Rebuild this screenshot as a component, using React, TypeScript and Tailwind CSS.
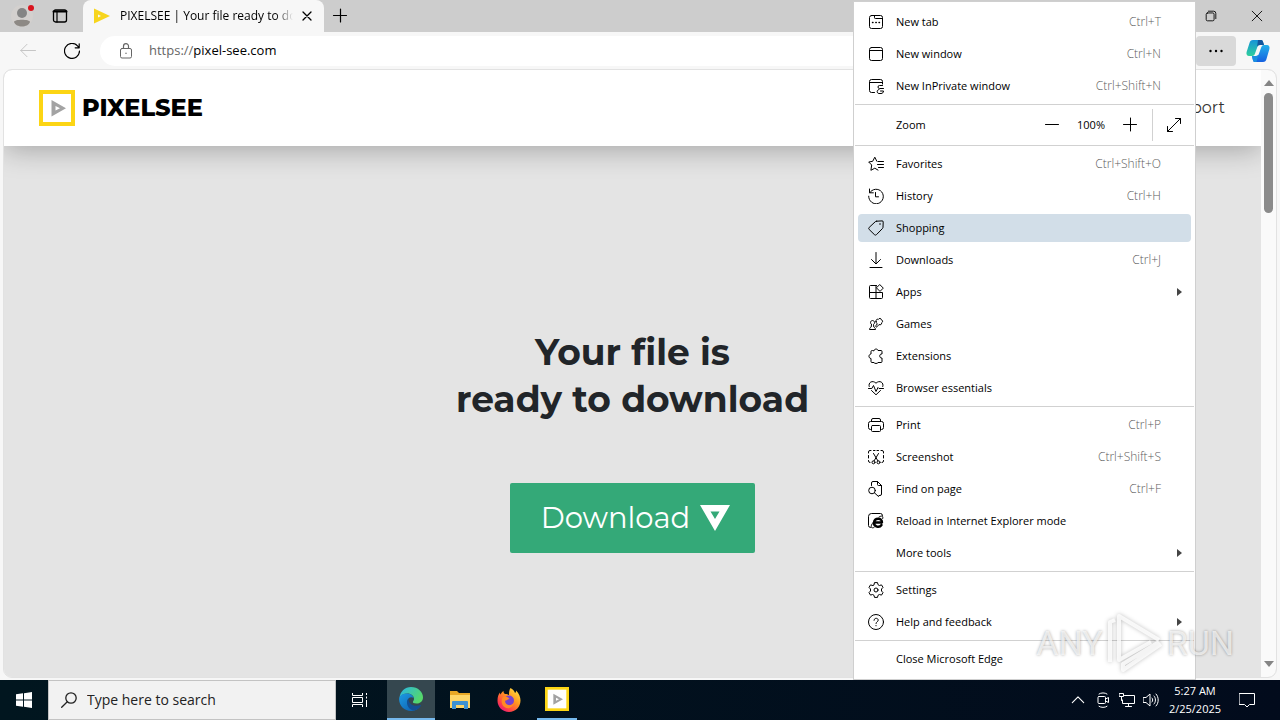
import type { ReactNode } from "react";

type IconProps = { children: ReactNode; size?: string };

// 16px outline icon used all over the browser chrome
function Icon({ children, size = "size-4" }: IconProps) {
  return (
    <svg viewBox="0 0 16 16" fill="none" stroke="currentColor" strokeLinejoin="round" strokeLinecap="round" className={`${size} shrink-0`} aria-hidden="true">
      {children}
    </svg>
  );
}

const icons: Record<string, ReactNode> = {
  newTab: (
    <>
      <rect x="1.5" y="1.5" width="13" height="13" rx="2" />
      <path d="M6.5 1.5v2.2a.8.8 0 0 0 .8.8h7.2" />
      <path d="M4.5 8.5h.5M7.8 8.5h.5M11 8.5h.5" strokeWidth="1.4" />
    </>
  ),
  newWindow: (
    <>
      <rect x="1.5" y="1.5" width="13" height="13" rx="2" />
      <path d="M1.5 4.5h13" />
    </>
  ),
  inPrivate: (
    <>
      <path d="M6.5 14.5h-3a2 2 0 0 1-2-2v-9a2 2 0 0 1 2-2h9a2 2 0 0 1 2 2V6M1.5 4.5h13" />
      <path d="M14.5 7.5h-3a1.5 1.5 0 0 0 0 3h3M15.5 10.500h-3M11 11.500c-2.500 0-2.500 4 0 4h2c1.500 0 2.500-1 2.500-2.500h-3" />
    </>
  ),
  favorites: (
    <>
      <path d="M8.8 5.2l-2-4-2.100 4.100L.7 6l3 3-.8 5.300 3.900-2.100 3.200 1.900" />
      <path d="M10 5.500h5.500M9.500 8.500h6M10.500 11.500h5" />
    </>
  ),
  history: (
    <>
      <path d="M1.500 1v3.800h3.800" />
      <path d="M1.700 4.800a7.300 7.300 0 1 1-1 3.400M7.500 4.500v4.300h3" />
    </>
  ),
  shopping: (
    <>
      <path d="M8.700 1.200 14 .9a1.100 1.100 0 0 1 1.200 1.200L15 7.300a2 2 0 0 1-.6 1.300l-5.900 6a1.500 1.500 0 0 1-2.100 0L1.200 9.500a1.500 1.500 0 0 1 0-2.100l6.100-5.700a2 2 0 0 1 1.400-.5Z" />
      <circle cx="12" cy="4" r=".8" fill="currentColor" stroke="none" />
    </>
  ),
  downloads: <path d="M8 .5v11M3.500 7.500 8 12l4.500-4.500M2 15.500h12" />,
  apps: (
    <>
      <path d="M8.500 1.500h-6a1 1 0 0 0-1 1v11a1 1 0 0 0 1 1h11a1 1 0 0 0 1-1v-5h-13M8 1.500v13" />
      <path d="M12 .8 15.300 4.100 12 7.400 8.700 4.100Z" fill="white" />
    </>
  ),
  games: (
    <>
      <path d="M3.500 8.500C1.800 7.500 2.300 4.500 4.500 4.500s2.700 3 1 4l.3 2.500c1 .5 1.700 1.500 1.700 2.500h-6c0-1 .7-2 1.700-2.500l.3-2.500" />
      <path d="M8 5.500C7.500 3.500 9.500 2.700 10.300 3.500c.7-1.800 3-1.300 3 .3 1.800.4 1.600 2.500.3 3 .3 1.800-1.300 2.500-2.600 1.700l-2 2.300c-.7.7-1.700-.3-1.200-1l1.500-2C8.500 7.500 8 6.500 8 5.500Z" />
    </>
  ),
  extensions: (
    <path d="M6 2.500c.2-2 3.800-2 4 0h3a1 1 0 0 1 1 1V6c-3-.6-3 4.600 0 4v3.500a1 1 0 0 1-1 1h-3c-.4 1.300-3.600 1.300-4 0H4a1 1 0 0 1-1-1v-3C.3 10.300.3 6.300 3 6V3.500a1 1 0 0 1 1-1Z" />
  ),
  essentials: (
    <>
      <path d="M1.200 6.500C-.2 2.500 4.500-.3 8 3.200c3.500-3.500 8.200-.7 6.800 3.300M3.500 10.500 8 14.800l4.500-4.300" />
      <path d="M.5 8.500h3.300l1.700-3 2.500 6 2-4 1 1h4.500" />
    </>
  ),
  print: (
    <>
      <path d="M3.500 12.500h-1a2 2 0 0 1-2-2v-4a2 2 0 0 1 2-2h11a2 2 0 0 1 2 2v4a2 2 0 0 1-2 2h-1M3.500 4.500V3A1.500 1.500 0 0 1 5 1.500h6A1.500 1.500 0 0 1 12.500 3v1.500" />
      <rect x="3.5" y="8.5" width="9" height="6" rx="1" />
    </>
  ),
  screenshot: (
    <>
      <path d="M3 1.500H2A1.500 1.500 0 0 0 .5 3v1M5.500 1.500H7M9 1.500h1.500M13 1.500h1A1.500 1.500 0 0 1 15.500 3v1M15.500 6.500V9M15.500 11.500v.5a1.500 1.500 0 0 1-1.500 1.500M.5 6.500V9M.5 11.500v.5A1.500 1.500 0 0 0 2 13.500" />
      <path d="m5.500 4.500 4.500 7.500M10.500 4.500 6 12" />
      <circle cx="5.500" cy="13.300" r="1.500" />
      <circle cx="10.500" cy="13.300" r="1.500" />
    </>
  ),
  find: (
    <>
      <path d="M3.500 4.500V2A1.500 1.500 0 0 1 5 .5h4.500l4 4V13a1.500 1.500 0 0 1-1.500 1.500h-1M9.500.5v3a1 1 0 0 0 1 1h3" />
      <circle cx="4" cy="9.500" r="3.300" />
      <path d="m6.500 11.900 4 3.600" />
    </>
  ),
  ie: (
    <>
      <path d="M2.500 14.500a2 2 0 0 1-2-2v-9a3 3 0 0 1 3-3h9a2 2 0 0 1 2 2" />
      <path d="M6 9.500h8c.2-5-7.500-5-8 0-.3 4.500 5.500 5.500 7.500 2.500" strokeWidth="2.4" />
      <path d="M5.500 9C2 13 2.500 16 6 14.500M11 4c3-1.800 4.500-1 3.700 1.500" />
    </>
  ),
  settings: (
    <>
      <path d="M6 2.700 6.500.6h3l.5 2.100 1.400.8 2.100-.6 1.500 2.500L13.500 7v2l1.500 1.600-1.500 2.500-2.100-.6-1.400.8-.5 2.100h-3L6 13.300l-1.400-.8-2.100.6L1 10.600 2.500 9V7L1 5.400l1.500-2.500 2.100.6Z" />
      <circle cx="8" cy="8" r="2" />
    </>
  ),
  help: (
    <>
      <circle cx="8" cy="8" r="7.500" />
      <path d="M6 6.300c0-2.800 4.200-2.600 4.200-.1C10.200 7.800 8 7.700 8 9.500M8 11.500v.3" />
    </>
  ),
};

type MenuEntry = {
  label: string;
  icon?: string;
  keys?: string;
  submenu?: boolean;
  active?: boolean;
};

const newItems: MenuEntry[] = [
  { label: "New tab", icon: "newTab", keys: "Ctrl+T" },
  { label: "New window", icon: "newWindow", keys: "Ctrl+N" },
  { label: "New InPrivate window", icon: "inPrivate", keys: "Ctrl+Shift+N" },
];

const browseItems: MenuEntry[] = [
  { label: "Favorites", icon: "favorites", keys: "Ctrl+Shift+O" },
  { label: "History", icon: "history", keys: "Ctrl+H" },
  { label: "Shopping", icon: "shopping", active: true },
  { label: "Downloads", icon: "downloads", keys: "Ctrl+J" },
  { label: "Apps", icon: "apps", submenu: true },
  { label: "Games", icon: "games" },
  { label: "Extensions", icon: "extensions" },
  { label: "Browser essentials", icon: "essentials" },
];

const pageItems: MenuEntry[] = [
  { label: "Print", icon: "print", keys: "Ctrl+P" },
  { label: "Screenshot", icon: "screenshot", keys: "Ctrl+Shift+S" },
  { label: "Find on page", icon: "find", keys: "Ctrl+F" },
  { label: "Reload in Internet Explorer mode", icon: "ie" },
  { label: "More tools", submenu: true },
];

const helpItems: MenuEntry[] = [
  { label: "Settings", icon: "settings" },
  { label: "Help and feedback", icon: "help", submenu: true },
];

function MenuItem({ item }: { item: MenuEntry }) {
  return (
    <button
      type="button"
      role="menuitem"
      className={`mx-1 my-0.5 flex h-7 items-center rounded-sm pr-2 pl-2.5 text-left ${item.active ? "bg-[#d2dee8]" : ""}`}
    >
      <span className="mr-3 flex size-4 shrink-0">{item.icon && <Icon>{icons[item.icon]}</Icon>}</span>
      <span className="flex-1">{item.label}</span>
      {item.keys && <span className="text-xs font-light text-[#5c5c5c]">{item.keys}</span>}
      <span className="ml-3 flex w-2.5 justify-end">
        {item.submenu && (
          <svg viewBox="0 0 6 8" className="h-2 w-1.5" aria-hidden="true">
            <path d="M0 0v8l5-4Z" fill="#444" />
          </svg>
        )}
      </span>
    </button>
  );
}

function MenuGroup({ items }: { items: MenuEntry[] }) {
  return (
    <div role="group" className="flex flex-col">
      {items.map((item) => (
        <MenuItem key={item.label} item={item} />
      ))}
    </div>
  );
}

function Separator() {
  return <div role="separator" className="mx-px my-0.5 h-px shrink-0 bg-[#d1d1d1]" />;
}

function BrowserMenu() {
  return (
    <div role="menu" className="absolute top-px right-[84px] flex w-[343px] flex-col border border-[#cfcfcf] bg-white py-1 text-[11px] text-black">
      <MenuGroup items={newItems} />
      <Separator />
      <div className="flex h-9 items-center pl-[42px]">
        <span className="flex-1">Zoom</span>
        <button type="button" aria-label="Zoom out" className="flex w-8 justify-center">
          <Icon><path d="M1.500 7.500h13" /></Icon>
        </button>
        <span className="w-[46px] text-center">100%</span>
        <button type="button" aria-label="Zoom in" className="flex w-8 justify-center">
          <Icon><path d="M1.500 7.500h13M8.500 1v13" /></Icon>
        </button>
        <button type="button" aria-label="Full screen" className="ml-1.5 flex h-8 w-[43px] items-center justify-center border-l border-[#d1d1d1]">
          <Icon><path d="M1.500 14.500l13-13M9.500 1.500h5v5M1.500 9.500v5h5" /></Icon>
        </button>
      </div>
      <Separator />
      <MenuGroup items={browseItems} />
      <Separator />
      <MenuGroup items={pageItems} />
      <Separator />
      <MenuGroup items={helpItems} />
      <Separator />
      <MenuItem item={{ label: "Close Microsoft Edge" }} />
    </div>
  );
}

function TitleBar() {
  return (
    <header className="flex h-8 bg-[#cdcdcd]">
      <button type="button" aria-label="Profile" className="ml-1 flex w-9 items-center justify-center">
        <svg viewBox="0 0 24 24" className="size-6" aria-hidden="true">
          <circle cx="12" cy="12" r="11" fill="#d3d0ce" />
          <circle cx="12" cy="9" r="5" fill="#858585" />
          <path d="M4 18c0-3 16-3 16 0-2 6-14 6-16 0Z" fill="#8d8985" />
          <circle cx="21" cy="4" r="3" fill="#d9141e" />
        </svg>
      </button>
      <button type="button" aria-label="Tab actions" className="flex w-10 items-center justify-center">
        <Icon>
          <rect x="1.5" y="2" width="13" height="12" rx="2" strokeWidth="1.3" />
          <path d="M1.500 3.500h13" strokeWidth="2" />
          <path d="M5 4v10" strokeWidth="1.2" />
        </Icon>
      </button>
      <div className="ml-[3px] flex w-[241px] items-center rounded-t-lg bg-[#f7f7f7] pl-[11px]">
        <svg viewBox="0 0 16 16" className="size-4 shrink-0" aria-hidden="true">
          <path d="M0 .5v15L16 8ZM4 6.500 7 8 4 9.500Z" fill="#f7d51d" fillRule="evenodd" />
        </svg>
        <span className="ml-2.5 w-[173px] overflow-hidden mask-r-from-90% text-xs whitespace-nowrap">PIXELSEE | Your file ready to down</span>
        <button type="button" aria-label="Close tab" className="ml-1.5">
          <Icon><path d="m4 4 8 8M12 4l-8 8" strokeWidth="1.3" /></Icon>
        </button>
      </div>
      <button type="button" aria-label="New tab" className="ml-2">
        <Icon><path d="M1.500 7.500h13M8.500 1v13" strokeWidth="1.2" /></Icon>
      </button>
      <div className="ml-auto flex">
        <button type="button" aria-label="Restore" className="flex w-[46px] items-center justify-center">
          <Icon size="size-3.5">
            <rect x="2.5" y="4.5" width="9" height="9" rx="1.5" />
            <path d="M5 2.500h6a2.500 2.500 0 0 1 2.500 2.500v6" />
          </Icon>
        </button>
        <button type="button" aria-label="Close" className="flex w-[46px] items-center justify-center">
          <Icon size="size-3.5"><path d="m2.500 2.500 11 11M13.500 2.500l-11 11" /></Icon>
        </button>
      </div>
    </header>
  );
}

function CopilotLogo() {
  return (
    <svg viewBox="0 0 24 24" className="size-6" aria-hidden="true">
      <defs>
        <linearGradient id="copilotA" x1="0" y1="0" x2="0" y2="1">
          <stop offset="0" stopColor="#1593d8" />
          <stop offset="1" stopColor="#2fcf9c" />
        </linearGradient>
        <linearGradient id="copilotB" x1="0" y1="0" x2="0" y2="1">
          <stop offset="0" stopColor="#22b0ea" />
          <stop offset="1" stopColor="#1560e0" />
        </linearGradient>
      </defs>
      <path d="M7 1h8c2 0 2 2 3 5h-4c-2 0-2.500 1-3 3l-2 5.500c-.5 1.500-1 2.500-3 2.500H3c-2 0-3-2-2.400-4L3.500 4C4 2 5 1 7 1Z" fill="url(#copilotA)" />
      <path d="M17 23H9c-2 0-2-2-3-6h4c2 0 2.500-1 3-2.500l2-5.500c.5-1.500 1-3 3-3h3c2 0 3 2 2.400 4L20.500 20c-.5 2-1.500 3-3.500 3Z" fill="url(#copilotB)" />
      <path d="M12 1h3c2 0 2 2 3 5h-4c-1.500 0-2.500.7-3 2Z" fill="#12559c" />
      <path d="M6 17h4c1 0 1.700-.3 2.300-1L10.500 23H9c-2 0-2-2-3-6Z" fill="#1a8fe0" />
    </svg>
  );
}

function Toolbar() {
  return (
    <div className="flex h-[38px] items-center bg-[#f7f7f7]">
      <button type="button" aria-label="Back" disabled className="ml-5 text-[#c6c6c6]">
        <Icon><path d="M15.500 7.500H.8M7 1.300.8 7.500 7 13.700" /></Icon>
      </button>
      <button type="button" aria-label="Refresh" className="ml-7">
        <Icon><path d="M15.500 8a7.500 7.500 0 1 1-2-5.200L15 4.500M15.200.8v4h-4" strokeWidth="1.2" /></Icon>
      </button>
      <form className="ml-5 flex h-[30px] flex-1 items-center rounded-full bg-white pl-[18px] text-[#666]">
        <Icon>
          <rect x="2.5" y="5.500" width="11" height="9.500" rx="1.5" />
          <path d="M5.500 5.500V3.200a2.500 2.500 0 0 1 5 0v2.300M8 10v.5" strokeWidth="1.2" />
        </Icon>
        <label htmlFor="address" className="ml-[15px] text-[13px]">https://</label>
        <input id="address" defaultValue="pixel-see.com" className="min-w-0 flex-1 text-[13px] text-black outline-none" />
      </form>
      <button type="button" aria-label="Settings and more" className="flex h-[30px] w-10 items-center justify-center rounded-sm bg-[#d9d9d9]">
        <svg viewBox="0 0 16 16" className="size-4" aria-hidden="true">
          <circle cx="2.500" cy="8" r="1.200" />
          <circle cx="8" cy="8" r="1.200" />
          <circle cx="13.500" cy="8" r="1.200" />
        </svg>
      </button>
      <button type="button" aria-label="Copilot" className="mx-2.5">
        <CopilotLogo />
      </button>
    </div>
  );
}

function PixelSeeMark({ className }: { className: string }) {
  return (
    <svg viewBox="0 0 36 36" className={className} aria-hidden="true">
      <rect x="2" y="2" width="32" height="32" fill="#fff" stroke="#fcd514" strokeWidth="4" />
      <path d="M12.500 10v16.500L27 18.200ZM16.500 16l4.500 2.200-4.500 2.300Z" fill="#a3a3a3" fillRule="evenodd" />
    </svg>
  );
}

function WebPage() {
  return (
    <div className="mx-1 mb-[3px] flex flex-1 overflow-hidden rounded-lg bg-[#e4e4e4] outline outline-[#e2e2e2]">
      <main className="flex flex-1 flex-col font-[Montserrat,Lato,sans-serif]">
        <div className="flex h-[76px] items-center justify-between bg-white pr-9 pl-[35px] shadow-[0_4px_28px_rgba(0,0,0,0.28)]">
          <a href="#home" className="flex items-center gap-[7px] text-2xl font-extrabold text-black">
            <PixelSeeMark className="size-9" />
            PIXELSEE
          </a>
          <a href="#support" className="text-base text-[#333]">Support</a>
        </div>
        <div className="flex flex-1 flex-col items-center pt-[183px]">
          <h1 className="text-center text-4xl leading-[47px] font-bold text-[#212529]">
            Your file is
            <br />
            ready to download
          </h1>
          <button type="button" className="mt-[60px] flex h-[70px] w-[245px] items-center justify-center gap-2.5 rounded-xs bg-[#34a978] pl-1.5 text-[29px] text-white">
            Download
            <svg viewBox="0 0 30 26" className="h-[26px] w-[30px]" aria-hidden="true">
              <path d="M0 0h30L15 26ZM10.500 6.500h9L15 14Z" fill="#fff" fillRule="evenodd" />
            </svg>
          </button>
        </div>
      </main>
      <div className="flex w-[15px] flex-col items-center justify-between bg-[#fafafa] py-2.5">
        <svg viewBox="0 0 10 6" className="h-1.5 w-2.5" aria-hidden="true"><path d="M0 6h10L5 0Z" fill="#858585" /></svg>
        <div className="mt-[7px] mb-auto h-[120px] w-[9px] rounded-full bg-[#8b8b8b]" />
        <svg viewBox="0 0 10 6" className="h-1.5 w-2.5" aria-hidden="true"><path d="M0 0h10L5 6Z" fill="#858585" /></svg>
      </div>
    </div>
  );
}

function EdgeLogo() {
  return (
    <svg viewBox="0 0 24 24" className="size-6" aria-hidden="true">
      <defs>
        <linearGradient id="edgeTop" x1="0" y1="0" x2="1" y2=".5">
          <stop offset="0" stopColor="#28b5e8" />
          <stop offset="1" stopColor="#55d86a" />
        </linearGradient>
        <linearGradient id="edgeLow" x1="0" y1="0" x2="1" y2="1">
          <stop offset="0" stopColor="#1c9be4" />
          <stop offset="1" stopColor="#0d58a8" />
        </linearGradient>
      </defs>
      <path d="M.5 11C1 4.500 6 0 12 0c7 0 12 5 12 10.200 0 4-3 6.300-6.500 6.300-3 0-4-1-3.500-2 .8-1 1-1.700 1-2.700C15 9 12 6.500 8.500 6.500 4.500 6.500 1.500 8.500.5 11Z" fill="url(#edgeTop)" />
      <path d="M.1 12.500C0 8.500 4 6.500 8 6.500c3.500 0 6 2 6.700 4.500C10 8.500 7.500 13 9 17c1.500 3.500 6 5.500 12.500 2-2 3-5.500 5-9.500 5C5.500 24 .3 19 .1 12.500Z" fill="url(#edgeLow)" />
      <path d="M9.300 11.500C6 15 9 23 15 23.500c3-.8 5.500-2.500 7-5 .2-.5-.2-.7-.7-.5C15 20.500 9.500 17 9.300 11.500Z" fill="#134f93" />
    </svg>
  );
}

function FolderIcon() {
  return (
    <svg viewBox="0 0 22 20" className="h-5 w-[22px]" aria-hidden="true">
      <path d="M1 1h7l2 2h11v15H1Z" fill="#e9a825" />
      <path d="M1 5h20v13H1Z" fill="#ffd667" />
      <path d="M4 11h14a1 1 0 0 1 1 1v7h-4v-4H7v4H3v-7a1 1 0 0 1 1-1Z" fill="#3f93d2" />
    </svg>
  );
}

function FirefoxLogo() {
  return (
    <svg viewBox="0 0 24 24" className="size-6" aria-hidden="true">
      <defs>
        <linearGradient id="foxFire" x1="1" y1="0" x2=".2" y2="1">
          <stop offset="0" stopColor="#fff04a" />
          <stop offset=".45" stopColor="#ff9a1f" />
          <stop offset=".8" stopColor="#ff3e48" />
          <stop offset="1" stopColor="#e3177f" />
        </linearGradient>
      </defs>
      <path d="M13.500 0c3 1.800 4 3.500 4.500 5 1-.5 1-1.500 1-2.500 3 3 4.500 6.500 4.500 10C23.500 19 18.500 24 12 24S.5 19 .5 12.800c0-3.800 1-6.800 2.500-8.300 0 1 .2 1.500.5 2C4.500 4.500 5.500 3.500 6.500 3c0 1.500.5 2.500 1.500 3 2 0 3 .5 4 1 0-3 .2-5 1.500-7Z" fill="url(#foxFire)" />
      <circle cx="12" cy="12.500" r="5" fill="#7542cf" />
      <path d="M6 9c3-1 5 0 6.500 2-2 .3-3 1.500-4.500 1.800C8 17 13 19 17 15c-1 5-6 6.500-9.500 4S4 12 6 9Z" fill="#ff8a24" />
    </svg>
  );
}

function Taskbar() {
  return (
    <footer className="flex h-10 bg-linear-to-r from-[#01161f] to-[#020b1c] text-white">
      <button type="button" aria-label="Start" className="flex w-12 items-center justify-center">
        <svg viewBox="0 0 16 16" className="size-4" aria-hidden="true">
          <path d="M0 2.300 7 1.300v6.200H0ZM8 1.200 16 0v7.500H8ZM0 8.500h7v6.200l-7-1ZM8 8.500h8V16l-8-1.200Z" fill="#fff" />
        </svg>
      </button>
      <label className="flex w-72 items-center gap-2.5 border border-[#c3c3c3] bg-[#f2f2f2] pl-3 text-[#222]">
        <Icon><circle cx="10" cy="6" r="5.200" strokeWidth="1.3" /><path d="M6.300 9.700.7 15.300" strokeWidth="1.3" /></Icon>
        <input aria-label="Search" placeholder="Type here to search" className="min-w-0 flex-1 text-sm outline-none placeholder:text-[#222]" />
      </label>
      <button type="button" aria-label="Task view" className="mr-[3px] flex w-12 items-center justify-center">
        <Icon><path d="M.5 1v2.500h10V1M.5 15v-2.500h10V15M.5 5.500h10v5H.5ZM14.500 1v2M14.500 8v7M14.500 4.500v2" strokeLinecap="butt" /></Icon>
      </button>
      <button type="button" aria-label="Microsoft Edge" className="flex w-12 items-center justify-center border-b-2 border-[#76b9ed] bg-[#35474f]"><EdgeLogo /></button>
      <button type="button" aria-label="File Explorer" className="flex w-[49px] items-center justify-center"><FolderIcon /></button>
      <button type="button" aria-label="Firefox" className="flex w-[49px] items-center justify-center"><FirefoxLogo /></button>
      <button type="button" aria-label="PixelSee" className="mx-1 flex w-10 items-center justify-center border-b-2 border-[#76b9ed]"><PixelSeeMark className="size-6" /></button>
      <div className="ml-auto flex items-center">
        <button type="button" aria-label="Show hidden icons" className="mr-2.5"><Icon size="size-3.5"><path d="m1.500 11 6.500-6.500 6.500 6.500" strokeWidth="1.3" /></Icon></button>
        <button type="button" aria-label="Meet now" className="mr-2"><Icon><rect x="3" y="4.500" width="7.500" height="7" rx="1" /><path d="m10.500 7 3-1.500v5l-3-1.500M4 2c2-1.500 6-1.500 8 0M4 14.300c2 1.500 6 1.500 8 0" /></Icon></button>
        <button type="button" aria-label="Network" className="mr-2"><Icon><path d="M5.500 3.500h10v8h-12V8M9.500 11.500v3M6.500 14.500h6M.5 1.500h4v3h-4ZM2.500 4.500v4" /></Icon></button>
        <button type="button" aria-label="Volume" className="mr-2"><Icon><path d="M.5 5.500H3L7 2v12l-4-3.500H.5ZM9 6c1 1 1 3 0 4M11 4c2 2 2 6 0 8M13 2c3 3 3 9 0 12" /></Icon></button>
        <time dateTime="2025-02-25T05:27" className="w-[56px] text-center text-[11px] leading-[18px] whitespace-nowrap">
          5:27 AM
          <br />
          2/25/2025
        </time>
        <button type="button" aria-label="Notifications" className="mr-[25px] ml-4"><Icon><path d="M.5 1.500h15v11h-5L8 15l-2.500-2.500h-5Z" strokeLinejoin="miter" /></Icon></button>
      </div>
    </footer>
  );
}

// translucent recording watermark in the lower right corner
function Watermark() {
  return (
    <div className="pointer-events-none absolute right-[46px] bottom-[46px] flex items-center gap-1 font-[Roboto,sans-serif] text-[34px] leading-[62px] font-normal text-white/70 [text-shadow:0_0_3px_rgb(0_0_0/0.35)]">
      ANY
      <svg viewBox="0 0 56 62" fill="none" stroke="#fff" strokeOpacity=".8" strokeWidth="4" strokeLinejoin="round" className="h-[62px] w-14 drop-shadow-[0_0_2px_rgba(0,0,0,0.3)]" aria-hidden="true">
        <path d="M3 50V10l5-2M12 46V4l40 24M12 14v34l32-18M52 30 16 52v6l38-26" />
      </svg>
      RUN
    </div>
  );
}

export default function App() {
  return (
    <div className="relative flex min-h-screen flex-col overflow-hidden bg-[#f7f7f7] font-['Open_Sans',sans-serif]">
      <TitleBar />
      <Toolbar />
      <WebPage />
      <Taskbar />
      <BrowserMenu />
      <Watermark />
    </div>
  );
}
